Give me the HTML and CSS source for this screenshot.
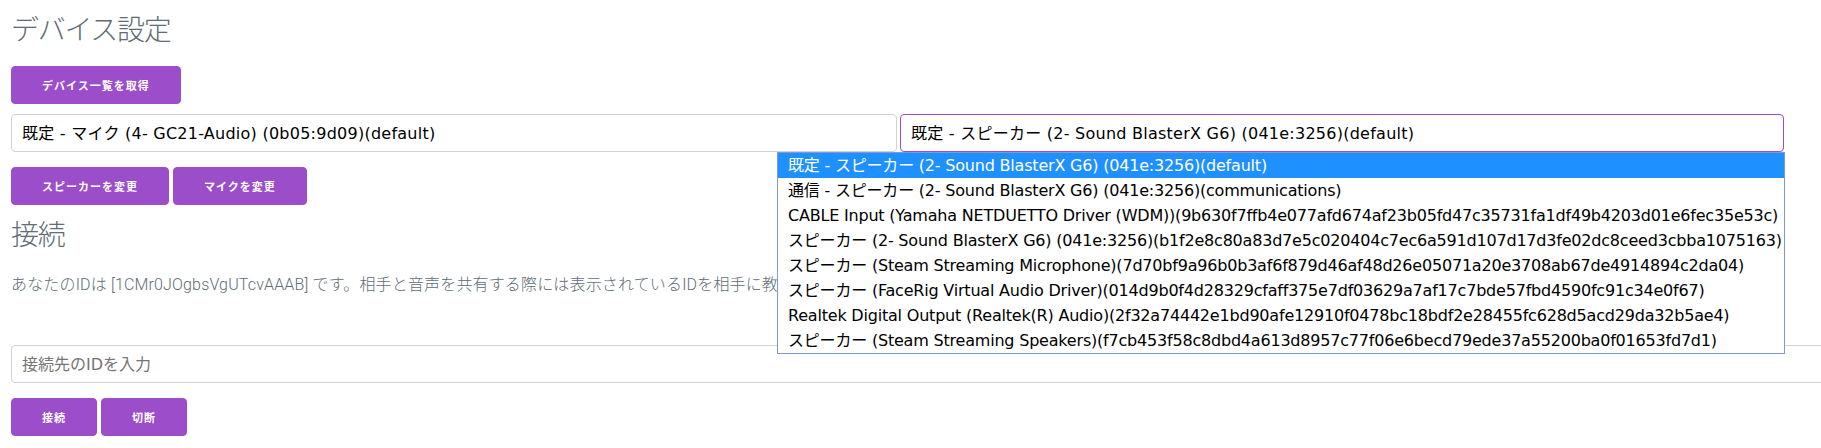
FILE: index.html
```html
<!DOCTYPE html>
<html lang="ja">
<head>
<meta charset="utf-8">
<title>デバイス設定</title>
<link rel="stylesheet" href="styles.css">
</head>
<body>
<div class="page">
  <h3 class="title">デバイス設定</h3>
  <div class="btn-row">
    <button class="btn" type="button">デバイス一覧を取得</button>
  </div>
  <div class="select-row">
    <select class="field select-mic">
      <option>既定 - マイク (4- GC21-Audio) (0b05:9d09)(default)</option>
    </select>
    <div class="select-wrap">
      <select class="field select-spk focused">
        <option>既定 - スピーカー (2- Sound BlasterX G6) (041e:3256)(default)</option>
      </select>
      <ul class="listbox">
        <li class="opt active">既定 - スピーカー (2- Sound BlasterX G6) (041e:3256)(default)</li>
        <li class="opt">通信 - スピーカー (2- Sound BlasterX G6) (041e:3256)(communications)</li>
        <li class="opt">CABLE Input (Yamaha NETDUETTO Driver (WDM))(9b630f7ffb4e077afd674af23b05fd47c35731fa1df49b4203d01e6fec35e53c)</li>
        <li class="opt">スピーカー (2- Sound BlasterX G6) (041e:3256)(b1f2e8c80a83d7e5c020404c7ec6a591d107d17d3fe02dc8ceed3cbba1075163)</li>
        <li class="opt">スピーカー (Steam Streaming Microphone)(7d70bf9a96b0b3af6f879d46af48d26e05071a20e3708ab67de4914894c2da04)</li>
        <li class="opt">スピーカー (FaceRig Virtual Audio Driver)(014d9b0f4d28329cfaff375e7df03629a7af17c7bde57fbd4590fc91c34e0f67)</li>
        <li class="opt">Realtek Digital Output (Realtek(R) Audio)(2f32a74442e1bd90afe12910f0478bc18bdf2e28455fc628d5acd29da32b5ae4)</li>
        <li class="opt">スピーカー (Steam Streaming Speakers)(f7cb453f58c8dbd4a613d8957c77f06e6becd79ede37a55200ba0f01653fd7d1)</li>
      </ul>
    </div>
  </div>
  <div class="btn-row">
    <button class="btn" type="button">スピーカーを変更</button>
    <button class="btn" type="button">マイクを変更</button>
  </div>
  <h3 class="title">接続</h3>
  <p class="info">あなたのIDは [1CMr0JOgbsVgUTcvAAAB] です。相手と音声を共有する際には表示されているIDを相手に教えてください。</p>
  <input class="field id-input" type="text" placeholder="接続先のIDを入力">
  <div class="btn-row">
    <button class="btn" type="button">接続</button>
    <button class="btn" type="button">切断</button>
  </div>
</div>
</body>
</html>
```
FILE: styles.css
```css
html, body {
  margin: 0;
  padding: 0;
  background: #ffffff;
}

body {
  font-family: Roboto, "Noto Sans CJK JP", sans-serif;
  font-weight: 300;
  font-size: 16px;
  letter-spacing: 0.01em;
  line-height: 1.6;
  color: #606c76;
  overflow: hidden;
}

.page {
  padding: 10px 0 0 11px;
  overflow: hidden;
}

.title {
  margin: 0 0 20px;
  font-family: "Noto Sans CJK JP", sans-serif;
  font-weight: 300;
  font-size: 28px;
  line-height: 36.4px;
  letter-spacing: -0.08rem;
  color: #606c76;
}

.btn-row {
  display: flex;
  gap: 4px;
  margin-bottom: 10px;
}

.btn {
  height: 38px;
  padding: 0 30px;
  border: 1px solid #9b4dca;
  border-radius: 4px;
  background: #9b4dca;
  color: #ffffff;
  font-family: "Noto Sans CJK JP", sans-serif;
  font-weight: 700;
  font-size: 11px;
  letter-spacing: 1px;
  line-height: 36px;
  cursor: pointer;
  white-space: nowrap;
}

.select-row {
  display: flex;
  gap: 3px;
  margin-bottom: 15px;
}

.field {
  box-sizing: border-box;
  height: 38px;
  padding: 6px 10px;
  border: 1px solid #d1d1d1;
  border-radius: 4px;
  background: #ffffff;
  font-family: "DejaVu Sans", "Noto Sans CJK JP", sans-serif;
  font-size: 16px;
  font-weight: 400;
  letter-spacing: 0;
  color: #000000;
  -webkit-appearance: none;
  appearance: none;
  outline: none;
}

.select-mic,
.select-spk {
  letter-spacing: 0.25px;
}

.select-mic {
  width: 886px;
}

.select-wrap {
  position: relative;
  width: 884px;
}

.select-spk {
  width: 884px;
}

.focused {
  border-color: #9b4dca;
}

.listbox {
  position: absolute;
  top: 100%;
  right: -1px;
  width: 1008px;
  box-sizing: border-box;
  margin: 0;
  padding: 0;
  list-style: none;
  background: #ffffff;
  border: 1px solid #7d9bd1;
  overflow: hidden;
  z-index: 10;
}

.opt {
  height: 25px;
  line-height: 25px;
  padding: 0 0 0 10px;
  font-family: "DejaVu Sans", "Noto Sans CJK JP", sans-serif;
  font-size: 16px;
  font-weight: 400;
  letter-spacing: -0.2px;
  color: #000000;
  white-space: nowrap;
}

.opt.active {
  background: #1e90ff;
  color: #ffffff;
}

.info {
  margin: 0 0 48px;
  white-space: nowrap;
}

.id-input {
  display: block;
  width: calc(100% + 40px);
  margin: 0 0 15px;
}

.id-input::placeholder {
  color: #757575;
}
```
